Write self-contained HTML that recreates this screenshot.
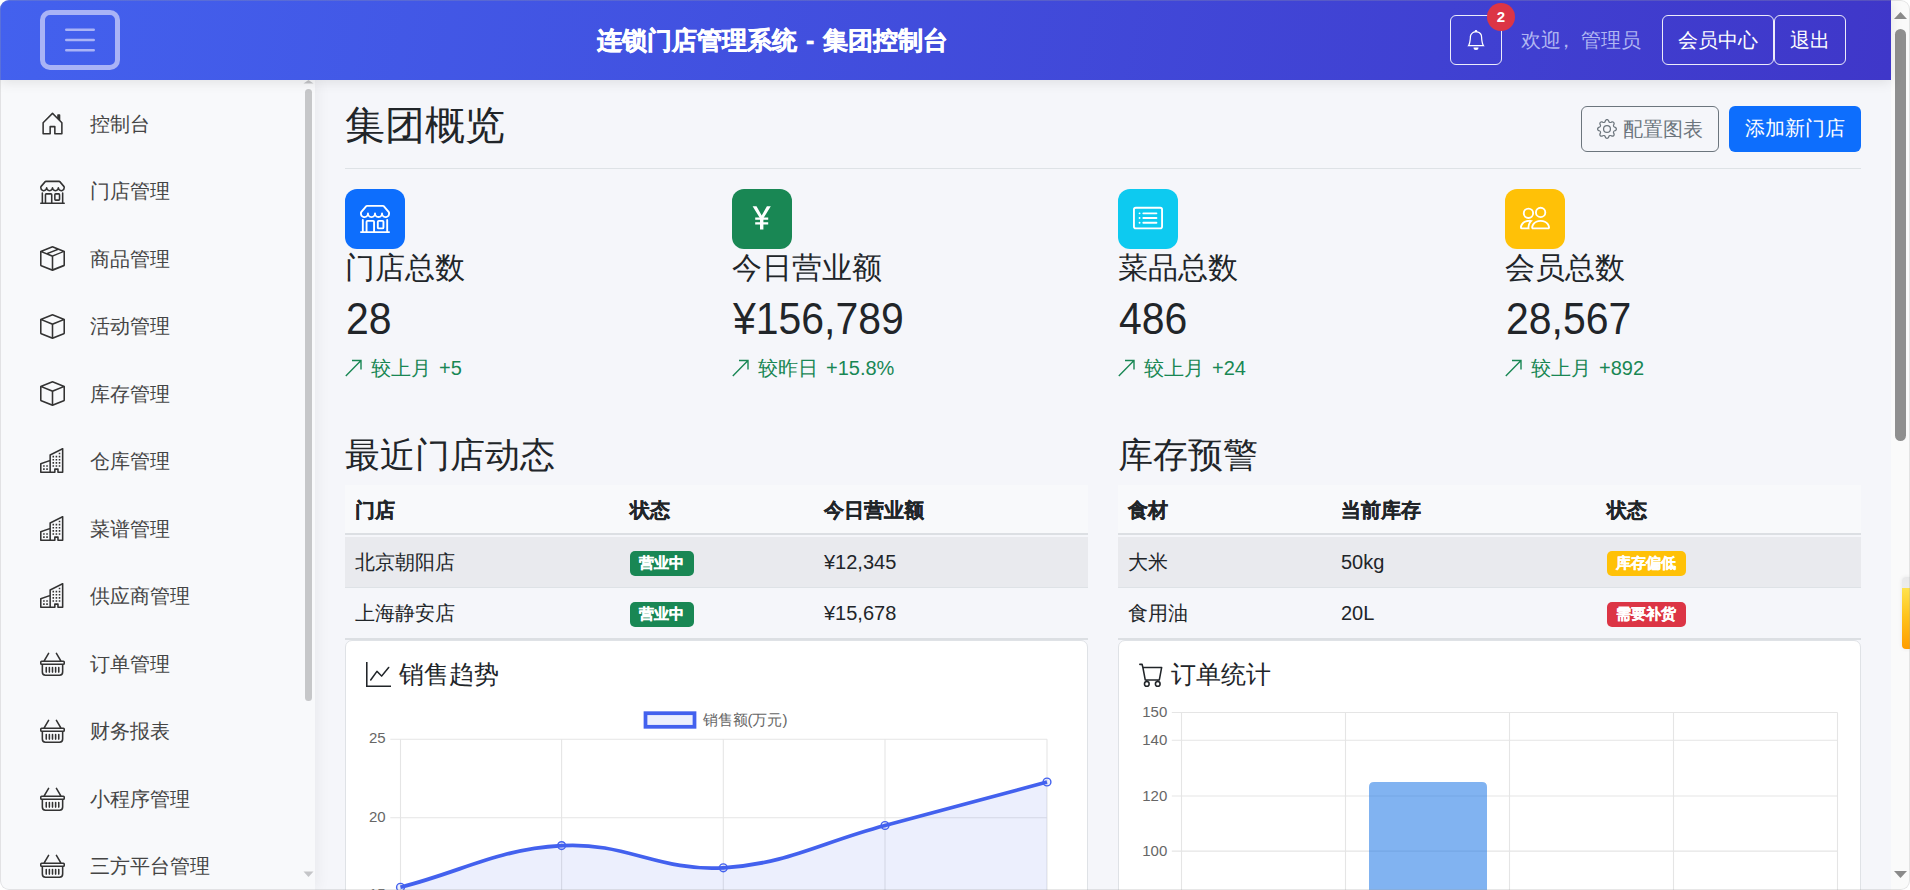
<!DOCTYPE html>
<html lang="zh">
<head>
<meta charset="utf-8">
<style>
*{box-sizing:border-box;margin:0;padding:0}
html,body{width:1910px;height:890px;overflow:hidden;background:#ffffff}
body{font-family:"Liberation Sans",sans-serif;color:#212529;position:relative}
.win{position:absolute;left:0;top:0;width:1910px;height:890px;border-radius:9px;overflow:hidden;background:#f5f6fa}
.abs{position:absolute}
/* header */
.hdr{position:absolute;left:0;top:0;width:1891px;height:80px;background:linear-gradient(100deg,#4361ee 0%,#3f37c9 100%);z-index:5;box-shadow:0 2px 12px rgba(0,0,0,0.10)}
.tog{position:absolute;left:40px;top:10px;width:80px;height:60px;border:5px solid #a9b3f6;border-radius:10px}
.title{position:absolute;left:597px;top:24px;font-size:25px;font-weight:bold;color:#fff;-webkit-text-stroke:0.5px #fff;white-space:nowrap;line-height:32px}
.hbtn{position:absolute;top:15px;height:50px;border:1px solid rgba(255,255,255,0.9);border-radius:6px;color:#fff;font-size:20px;line-height:48px;text-align:center;white-space:nowrap}
/* sidebar */
.side{position:absolute;left:0;top:80px;width:315px;height:810px;background:#f8f9fb;z-index:3;box-shadow:2px 0 14px rgba(0,0,0,0.06)}
.nav{position:absolute;left:0;width:300px;height:40px}
.nav svg{position:absolute;left:40px;top:7.2px}
.nav span{position:absolute;left:90px;top:0;font-size:20px;line-height:40px;color:#454545;white-space:nowrap}
/* scrollbars */
.sb{position:absolute;left:1891px;top:0;width:19px;height:890px;background:#fafafa}
/* main */
.h1{position:absolute;left:345px;top:101px;font-size:40px;line-height:48px;color:#212529;white-space:nowrap}
.rule{position:absolute;left:345px;top:168px;width:1516px;height:1px;background:#dee2e6}
.btn{position:absolute;top:106px;height:46px;border-radius:6px;font-size:20px;line-height:44px;white-space:nowrap}
.ibox{position:absolute;top:189px;width:60px;height:60px;border-radius:12px}
.lbl{position:absolute;top:248px;font-size:30px;line-height:40px;color:#212529;white-space:nowrap}
.num{position:absolute;top:292.5px;font-size:44.5px;line-height:52px;color:#212529;white-space:nowrap;transform:scaleX(0.92);transform-origin:0 0}
.trend{position:absolute;top:354px;font-size:20px;line-height:28px;color:#198754;white-space:nowrap}
.sec{position:absolute;top:433px;font-size:35px;line-height:44px;color:#212529;white-space:nowrap}
.tbl{position:absolute;top:485px;width:743px;height:155px}
.th{position:absolute;left:0;top:0;width:743px;height:50px;background:#f8f9fb;border-bottom:2px solid #dcdfe3}
.tr1{position:absolute;left:0;top:52px;width:743px;height:51px;background:#e9eaee;border-bottom:1px solid #dee2e6}
.tr2{position:absolute;left:0;top:103px;width:743px;height:52px;background:#f5f6fa;border-bottom:2px solid #dcdfe3}
.cell{position:absolute;font-size:20px;line-height:50px;white-space:nowrap;color:#212529}
.th .cell{font-weight:bold;-webkit-text-stroke:0.3px #212529}
.badge{position:absolute;top:14px;height:25px;width:64px;border-radius:5px;color:#fff;font-weight:bold;font-size:15px;line-height:24px;text-align:center;padding-right:1px;-webkit-text-stroke:0.3px #fff}
.card{position:absolute;top:640px;width:743px;height:300px;background:#fff;border:1px solid #dfe2e6;border-radius:7px}
.ctitle{position:absolute;top:655px;font-size:25px;line-height:38px;color:#212529;white-space:nowrap}
</style>
</head>
<body>
<div class="win">

<!-- HEADER -->
<div class="hdr">
  <div class="tog">
    </div>
  <svg class="abs" style="left:0;top:0" width="130" height="80"><path d="M66.3 29.8H93.7M66.3 40H93.7M66.3 50.2H93.7" stroke="#a9b3f6" stroke-width="2.6" stroke-linecap="round"/></svg>
  <div class="title">连锁门店管理系统</div><div class="title" style="left:806px">-</div><div class="title" style="left:823px">集团控制台</div>
  <div class="hbtn" style="left:1450px;width:52px"></div>
  <svg class="abs" style="left:1466px;top:29px" width="20" height="22" viewBox="0 0 16 16"><path fill="#fff" d="M8 16a2 2 0 0 0 2-2H6a2 2 0 0 0 2 2M8 1.918l-.797.161A4 4 0 0 0 4 6c0 .628-.134 2.197-.459 3.742-.16.767-.376 1.566-.663 2.258h10.244c-.287-.692-.502-1.49-.663-2.258C12.134 8.197 12 6.628 12 6a4 4 0 0 0-3.203-3.92zM14.22 12c.223.447.481.801.78 1H1c.299-.199.557-.553.78-1C2.68 10.2 3 6.88 3 6c0-2.42 1.72-4.44 4.005-4.901a1 1 0 1 1 1.99 0A5 5 0 0 1 13 6c0 .88.32 4.2 1.22 6"/></svg>
  <div class="abs" style="left:1487px;top:3px;width:28px;height:28px;border-radius:14px;background:#dc3545;color:#fff;font-weight:bold;font-size:15px;line-height:28px;text-align:center">2</div>
  <div class="abs" style="left:1521px;top:24px;font-size:20px;line-height:32px;color:#b0b6f2;white-space:nowrap">欢迎</div><div class="abs" style="left:1561px;top:24px;font-size:20px;line-height:32px;color:#b0b6f2;white-space:nowrap;transform:translateX(-5px)">，</div><div class="abs" style="left:1581px;top:24px;font-size:20px;line-height:32px;color:#b0b6f2;white-space:nowrap">管理员</div>
  <div class="hbtn" style="left:1662px;width:112px">会员中心</div>
  <div class="hbtn" style="left:1774px;width:72px">退出</div>
</div>

<!-- SIDEBAR -->
<div class="side" id="side">
<div class="nav" style="top:24.0px"><svg width="25" height="25" viewBox="0 0 16 16" fill="#333"><path d="M8.354 1.146a.5.5 0 0 0-.708 0l-6 6A.5.5 0 0 0 1.5 7.5v7a.5.5 0 0 0 .5.5h4.5a.5.5 0 0 0 .5-.5v-4h2v4a.5.5 0 0 0 .5.5H14a.5.5 0 0 0 .5-.5v-7a.5.5 0 0 0-.146-.354L13 5.793V2.5a.5.5 0 0 0-.5-.5h-1a.5.5 0 0 0-.5.5v1.293zM2.5 14V7.707l5.5-5.5 5.5 5.5V14H10v-4a.5.5 0 0 0-.5-.5h-3a.5.5 0 0 0-.5.5v4z"/></svg><span>控制台</span></div>
<div class="nav" style="top:91.4px"><svg width="25" height="25" viewBox="0 0 16 16" fill="#333"><path d="M2.97 1.35A1 1 0 0 1 3.73 1h8.54a1 1 0 0 1 .76.35l2.609 3.044A1.5 1.5 0 0 1 16 5.37v.255a2.375 2.375 0 0 1-4.25 1.458A2.37 2.37 0 0 1 9.875 8 2.37 2.37 0 0 1 8 7.083 2.37 2.37 0 0 1 6.125 8a2.37 2.37 0 0 1-1.875-.917A2.375 2.375 0 0 1 0 5.625V5.37a1.5 1.5 0 0 1 .361-.976zm1.78 4.275a1.375 1.375 0 0 0 2.75 0 .5.5 0 0 1 1 0 1.375 1.375 0 0 0 2.75 0 .5.5 0 0 1 1 0 1.375 1.375 0 1 0 2.75 0V5.37a.5.5 0 0 0-.12-.325L12.27 2H3.73L1.12 5.045A.5.5 0 0 0 1 5.37v.255a1.375 1.375 0 0 0 2.75 0 .5.5 0 0 1 1 0M1.5 8.5A.5.5 0 0 1 2 9v6h1v-5a1 1 0 0 1 1-1h3a1 1 0 0 1 1 1v5h6V9a.5.5 0 0 1 1 0v6h.5a.5.5 0 0 1 0 1H.5a.5.5 0 0 1 0-1H1V9a.5.5 0 0 1 .5-.5M4 15h3v-5H4zm5-5a1 1 0 0 1 1-1h2a1 1 0 0 1 1 1v3a1 1 0 0 1-1 1h-2a1 1 0 0 1-1-1zm3 0h-2v3h2z"/></svg><span>门店管理</span></div>
<div class="nav" style="top:158.9px"><svg width="25" height="25" viewBox="0 0 16 16" fill="#333"><path d="M8.186 1.113a.5.5 0 0 0-.372 0L1.846 3.5l2.404.961L10.404 2zm3.564 1.426L5.596 5 8 5.961 14.154 3.5zm3.25 1.538-6.5 2.6v7.922l6.5-2.6V4.24zM7.5 14.762V6.838L1 4.239v7.923zM7.443.184a1.5 1.5 0 0 1 1.114 0l7.129 2.852A.5.5 0 0 1 16 3.5v8.662a1 1 0 0 1-.629.928l-7.185 2.874a.5.5 0 0 1-.372 0L.63 13.09a1 1 0 0 1-.63-.928V3.5a.5.5 0 0 1 .314-.464z"/></svg><span>商品管理</span></div>
<div class="nav" style="top:226.4px"><svg width="25" height="25" viewBox="0 0 16 16" fill="#333"><path d="M8.186 1.113a.5.5 0 0 0-.372 0L1.846 3.5 8 5.961 14.154 3.5zM15 4.239l-6.5 2.6v7.922l6.5-2.6V4.24zM7.5 14.762V6.838L1 4.239v7.923zM7.443.184a1.5 1.5 0 0 1 1.114 0l7.129 2.852A.5.5 0 0 1 16 3.5v8.662a1 1 0 0 1-.629.928l-7.185 2.874a.5.5 0 0 1-.372 0L.63 13.09a1 1 0 0 1-.63-.928V3.5a.5.5 0 0 1 .314-.464z"/></svg><span>活动管理</span></div>
<div class="nav" style="top:293.8px"><svg width="25" height="25" viewBox="0 0 16 16" fill="#333"><path d="M8.186 1.113a.5.5 0 0 0-.372 0L1.846 3.5 8 5.961 14.154 3.5zM15 4.239l-6.5 2.6v7.922l6.5-2.6V4.24zM7.5 14.762V6.838L1 4.239v7.923zM7.443.184a1.5 1.5 0 0 1 1.114 0l7.129 2.852A.5.5 0 0 1 16 3.5v8.662a1 1 0 0 1-.629.928l-7.185 2.874a.5.5 0 0 1-.372 0L.63 13.09a1 1 0 0 1-.63-.928V3.5a.5.5 0 0 1 .314-.464z"/></svg><span>库存管理</span></div>
<div class="nav" style="top:361.2px"><svg width="25" height="25" viewBox="0 0 16 16" fill="#333"><path d="M14.763.075A.5.5 0 0 1 15 .5v15a.5.5 0 0 1-.5.5h-3a.5.5 0 0 1-.5-.5V14h-1v1.5a.5.5 0 0 1-.5.5h-9a.5.5 0 0 1-.5-.5V10a.5.5 0 0 1 .342-.474L6 7.64V4.5a.5.5 0 0 1 .276-.447l8-4a.5.5 0 0 1 .487.022M6 8.694 1 10.36V15h5zM7 15h2v-1.5a.5.5 0 0 1 .5-.5h2a.5.5 0 0 1 .5.5V15h2V1.309l-7 3.5z"/><path d="M2 11h1v1H2zm2 0h1v1H4zm-2 2h1v1H2zm2 0h1v1H4zm4-4h1v1H8zm2 0h1v1h-1zm-2 2h1v1H8zm2 0h1v1h-1zm2-2h1v1h-1zm0 2h1v1h-1zM8 7h1v1H8zm2 0h1v1h-1zm2 0h1v1h-1zM8 5h1v1H8zm2 0h1v1h-1zm2 0h1v1h-1zm0-2h1v1h-1z"/></svg><span>仓库管理</span></div>
<div class="nav" style="top:428.7px"><svg width="25" height="25" viewBox="0 0 16 16" fill="#333"><path d="M14.763.075A.5.5 0 0 1 15 .5v15a.5.5 0 0 1-.5.5h-3a.5.5 0 0 1-.5-.5V14h-1v1.5a.5.5 0 0 1-.5.5h-9a.5.5 0 0 1-.5-.5V10a.5.5 0 0 1 .342-.474L6 7.64V4.5a.5.5 0 0 1 .276-.447l8-4a.5.5 0 0 1 .487.022M6 8.694 1 10.36V15h5zM7 15h2v-1.5a.5.5 0 0 1 .5-.5h2a.5.5 0 0 1 .5.5V15h2V1.309l-7 3.5z"/><path d="M2 11h1v1H2zm2 0h1v1H4zm-2 2h1v1H2zm2 0h1v1H4zm4-4h1v1H8zm2 0h1v1h-1zm-2 2h1v1H8zm2 0h1v1h-1zm2-2h1v1h-1zm0 2h1v1h-1zM8 7h1v1H8zm2 0h1v1h-1zm2 0h1v1h-1zM8 5h1v1H8zm2 0h1v1h-1zm2 0h1v1h-1zm0-2h1v1h-1z"/></svg><span>菜谱管理</span></div>
<div class="nav" style="top:496.2px"><svg width="25" height="25" viewBox="0 0 16 16" fill="#333"><path d="M14.763.075A.5.5 0 0 1 15 .5v15a.5.5 0 0 1-.5.5h-3a.5.5 0 0 1-.5-.5V14h-1v1.5a.5.5 0 0 1-.5.5h-9a.5.5 0 0 1-.5-.5V10a.5.5 0 0 1 .342-.474L6 7.64V4.5a.5.5 0 0 1 .276-.447l8-4a.5.5 0 0 1 .487.022M6 8.694 1 10.36V15h5zM7 15h2v-1.5a.5.5 0 0 1 .5-.5h2a.5.5 0 0 1 .5.5V15h2V1.309l-7 3.5z"/><path d="M2 11h1v1H2zm2 0h1v1H4zm-2 2h1v1H2zm2 0h1v1H4zm4-4h1v1H8zm2 0h1v1h-1zm-2 2h1v1H8zm2 0h1v1h-1zm2-2h1v1h-1zm0 2h1v1h-1zM8 7h1v1H8zm2 0h1v1h-1zm2 0h1v1h-1zM8 5h1v1H8zm2 0h1v1h-1zm2 0h1v1h-1zm0-2h1v1h-1z"/></svg><span>供应商管理</span></div>
<div class="nav" style="top:563.6px"><svg width="25" height="25" viewBox="0 0 16 16" fill="#333"><path d="M5.757 1.071a.5.5 0 0 1 .172.686L3.383 6h9.234L10.07 1.757a.5.5 0 1 1 .858-.514L13.783 6H15a1 1 0 0 1 1 1v1a1 1 0 0 1-1 1v4.5a2.5 2.5 0 0 1-2.5 2.5h-9A2.5 2.5 0 0 1 1 13.5V9a1 1 0 0 1-1-1V7a1 1 0 0 1 1-1h1.217L5.07 1.243a.5.5 0 0 1 .686-.172zM2 9v4.5A1.5 1.5 0 0 0 3.5 15h9a1.5 1.5 0 0 0 1.5-1.5V9zM1 7v1h14V7zm3 3a.5.5 0 0 1 .5.5v3a.5.5 0 0 1-1 0v-3A.5.5 0 0 1 4 10m2 0a.5.5 0 0 1 .5.5v3a.5.5 0 0 1-1 0v-3A.5.5 0 0 1 6 10m2 0a.5.5 0 0 1 .5.5v3a.5.5 0 0 1-1 0v-3A.5.5 0 0 1 8 10m2 0a.5.5 0 0 1 .5.5v3a.5.5 0 0 1-1 0v-3a.5.5 0 0 1 .5-.5m2 0a.5.5 0 0 1 .5.5v3a.5.5 0 0 1-1 0v-3a.5.5 0 0 1 .5-.5"/></svg><span>订单管理</span></div>
<div class="nav" style="top:631.1px"><svg width="25" height="25" viewBox="0 0 16 16" fill="#333"><path d="M5.757 1.071a.5.5 0 0 1 .172.686L3.383 6h9.234L10.07 1.757a.5.5 0 1 1 .858-.514L13.783 6H15a1 1 0 0 1 1 1v1a1 1 0 0 1-1 1v4.5a2.5 2.5 0 0 1-2.5 2.5h-9A2.5 2.5 0 0 1 1 13.5V9a1 1 0 0 1-1-1V7a1 1 0 0 1 1-1h1.217L5.07 1.243a.5.5 0 0 1 .686-.172zM2 9v4.5A1.5 1.5 0 0 0 3.5 15h9a1.5 1.5 0 0 0 1.5-1.5V9zM1 7v1h14V7zm3 3a.5.5 0 0 1 .5.5v3a.5.5 0 0 1-1 0v-3A.5.5 0 0 1 4 10m2 0a.5.5 0 0 1 .5.5v3a.5.5 0 0 1-1 0v-3A.5.5 0 0 1 6 10m2 0a.5.5 0 0 1 .5.5v3a.5.5 0 0 1-1 0v-3A.5.5 0 0 1 8 10m2 0a.5.5 0 0 1 .5.5v3a.5.5 0 0 1-1 0v-3a.5.5 0 0 1 .5-.5m2 0a.5.5 0 0 1 .5.5v3a.5.5 0 0 1-1 0v-3a.5.5 0 0 1 .5-.5"/></svg><span>财务报表</span></div>
<div class="nav" style="top:698.5px"><svg width="25" height="25" viewBox="0 0 16 16" fill="#333"><path d="M5.757 1.071a.5.5 0 0 1 .172.686L3.383 6h9.234L10.07 1.757a.5.5 0 1 1 .858-.514L13.783 6H15a1 1 0 0 1 1 1v1a1 1 0 0 1-1 1v4.5a2.5 2.5 0 0 1-2.5 2.5h-9A2.5 2.5 0 0 1 1 13.5V9a1 1 0 0 1-1-1V7a1 1 0 0 1 1-1h1.217L5.07 1.243a.5.5 0 0 1 .686-.172zM2 9v4.5A1.5 1.5 0 0 0 3.5 15h9a1.5 1.5 0 0 0 1.5-1.5V9zM1 7v1h14V7zm3 3a.5.5 0 0 1 .5.5v3a.5.5 0 0 1-1 0v-3A.5.5 0 0 1 4 10m2 0a.5.5 0 0 1 .5.5v3a.5.5 0 0 1-1 0v-3A.5.5 0 0 1 6 10m2 0a.5.5 0 0 1 .5.5v3a.5.5 0 0 1-1 0v-3A.5.5 0 0 1 8 10m2 0a.5.5 0 0 1 .5.5v3a.5.5 0 0 1-1 0v-3a.5.5 0 0 1 .5-.5m2 0a.5.5 0 0 1 .5.5v3a.5.5 0 0 1-1 0v-3a.5.5 0 0 1 .5-.5"/></svg><span>小程序管理</span></div>
<div class="nav" style="top:766.0px"><svg width="25" height="25" viewBox="0 0 16 16" fill="#333"><path d="M5.757 1.071a.5.5 0 0 1 .172.686L3.383 6h9.234L10.07 1.757a.5.5 0 1 1 .858-.514L13.783 6H15a1 1 0 0 1 1 1v1a1 1 0 0 1-1 1v4.5a2.5 2.5 0 0 1-2.5 2.5h-9A2.5 2.5 0 0 1 1 13.5V9a1 1 0 0 1-1-1V7a1 1 0 0 1 1-1h1.217L5.07 1.243a.5.5 0 0 1 .686-.172zM2 9v4.5A1.5 1.5 0 0 0 3.5 15h9a1.5 1.5 0 0 0 1.5-1.5V9zM1 7v1h14V7zm3 3a.5.5 0 0 1 .5.5v3a.5.5 0 0 1-1 0v-3A.5.5 0 0 1 4 10m2 0a.5.5 0 0 1 .5.5v3a.5.5 0 0 1-1 0v-3A.5.5 0 0 1 6 10m2 0a.5.5 0 0 1 .5.5v3a.5.5 0 0 1-1 0v-3A.5.5 0 0 1 8 10m2 0a.5.5 0 0 1 .5.5v3a.5.5 0 0 1-1 0v-3a.5.5 0 0 1 .5-.5m2 0a.5.5 0 0 1 .5.5v3a.5.5 0 0 1-1 0v-3a.5.5 0 0 1 .5-.5"/></svg><span>三方平台管理</span></div>
<svg class="abs" style="left:300px;top:0" width="15" height="810"><path d="M8.5 0L3.5 3.5L13.5 3.5Z" fill="#c4c5c8"/><rect x="5" y="9" width="7" height="612" rx="3.5" fill="#c6c7c9"/><path d="M3.5 791.5L13.5 791.5L8.5 797Z" fill="#c4c5c8"/></svg>
</div>

<!-- PAGE SCROLLBAR -->
<div class="sb">
  <svg class="abs" style="left:0;top:0" width="19" height="890"><path d="M3 19L9.5 12L16 19Z" fill="#8a8a8a"/><rect x="4" y="29" width="11" height="412" rx="5.5" fill="#8f8f8f"/><path d="M3 871L16 871L9.5 878Z" fill="#8a8a8a"/></svg>
</div>

<!-- MAIN -->
<div class="h1">集团概览</div>
<div class="btn" style="left:1581px;width:138px;border:1px solid #6c757d;color:#6c757d"><span class="abs" style="left:41px;top:0">配置图表</span><svg class="abs" style="left:15px;top:12px" width="20" height="20" viewBox="0 0 16 16" fill="#6c757d"><path d="M8 4.754a3.246 3.246 0 1 0 0 6.492 3.246 3.246 0 0 0 0-6.492M5.754 8a2.246 2.246 0 1 1 4.492 0 2.246 2.246 0 0 1-4.492 0"/><path d="M9.796 1.343c-.527-1.79-3.065-1.79-3.592 0l-.094.319a.873.873 0 0 1-1.255.52l-.292-.16c-1.64-.892-3.433.902-2.54 2.541l.159.292a.873.873 0 0 1-.52 1.255l-.319.094c-1.79.527-1.79 3.065 0 3.592l.319.094a.873.873 0 0 1 .52 1.255l-.16.292c-.892 1.64.901 3.434 2.541 2.54l.292-.159a.873.873 0 0 1 1.255.52l.094.319c.527 1.79 3.065 1.79 3.592 0l.094-.319a.873.873 0 0 1 1.255-.52l.292.16c1.64.893 3.434-.902 2.54-2.541l-.159-.292a.873.873 0 0 1 .52-1.255l.319-.094c1.79-.527 1.79-3.065 0-3.592l-.319-.094a.873.873 0 0 1-.52-1.255l.16-.292c.893-1.64-.902-3.433-2.541-2.54l-.292.159a.873.873 0 0 1-1.255-.52zm-2.633.283c.246-.835 1.428-.835 1.674 0l.094.319a1.873 1.873 0 0 0 2.693 1.115l.291-.16c.764-.415 1.6.42 1.184 1.185l-.159.292a1.873 1.873 0 0 0 1.116 2.692l.318.094c.835.246.835 1.428 0 1.674l-.319.094a1.873 1.873 0 0 0-1.115 2.693l.16.291c.415.764-.42 1.6-1.185 1.184l-.291-.159a1.873 1.873 0 0 0-2.693 1.116l-.094.318c-.246.835-1.428.835-1.674 0l-.094-.319a1.873 1.873 0 0 0-2.692-1.115l-.292.16c-.764.415-1.6-.42-1.184-1.185l.159-.291A1.873 1.873 0 0 0 1.945 8.93l-.319-.094c-.835-.246-.835-1.428 0-1.674l.319-.094A1.873 1.873 0 0 0 3.06 4.377l-.16-.292c-.415-.764.42-1.6 1.185-1.184l.292.159a1.873 1.873 0 0 0 2.692-1.115z"/></svg></div>
<div class="btn" style="left:1729px;width:132px;background:#0d6efd;color:#fff;text-align:center">添加新门店</div>
<div class="rule"></div>

<div class="ibox" style="left:345px;background:#0d6efd"><svg class="abs" style="left:15px;top:14px" width="30" height="30" viewBox="0 0 16 16" fill="#fff"><path d="M2.97 1.35A1 1 0 0 1 3.73 1h8.54a1 1 0 0 1 .76.35l2.609 3.044A1.5 1.5 0 0 1 16 5.37v.255a2.375 2.375 0 0 1-4.25 1.458A2.37 2.37 0 0 1 9.875 8 2.37 2.37 0 0 1 8 7.083 2.37 2.37 0 0 1 6.125 8a2.37 2.37 0 0 1-1.875-.917A2.375 2.375 0 0 1 0 5.625V5.37a1.5 1.5 0 0 1 .361-.976zm1.78 4.275a1.375 1.375 0 0 0 2.75 0 .5.5 0 0 1 1 0 1.375 1.375 0 0 0 2.75 0 .5.5 0 0 1 1 0 1.375 1.375 0 1 0 2.75 0V5.37a.5.5 0 0 0-.12-.325L12.27 2H3.73L1.12 5.045A.5.5 0 0 0 1 5.37v.255a1.375 1.375 0 0 0 2.75 0 .5.5 0 0 1 1 0M1.5 8.5A.5.5 0 0 1 2 9v6h1v-5a1 1 0 0 1 1-1h3a1 1 0 0 1 1 1v5h6V9a.5.5 0 0 1 1 0v6h.5a.5.5 0 0 1 0 1H.5a.5.5 0 0 1 0-1H1V9a.5.5 0 0 1 .5-.5M4 15h3v-5H4zm5-5a1 1 0 0 1 1-1h2a1 1 0 0 1 1 1v3a1 1 0 0 1-1 1h-2a1 1 0 0 1-1-1zm3 0h-2v3h2z"/></svg></div>
<div class="ibox" style="left:732px;background:#198754"><svg class="abs" style="left:0;top:0" width="60" height="60"><path d="M20.6 17.2H24.5L29.7 26.6L34.9 17.2H38.8L31.4 29.2V40.5H28V29.2Z" fill="#fff"/><path d="M23.2 29.7H36.2M23.2 34.3H36.2" stroke="#fff" stroke-width="2.3" fill="none"/></svg></div>
<div class="ibox" style="left:1118px;background:#0dcaf0"><svg class="abs" style="left:14.5px;top:13.6px" width="30" height="30" viewBox="0 0 16 16" fill="#fff"><path d="M14.5 3a.5.5 0 0 1 .5.5v9a.5.5 0 0 1-.5.5h-13a.5.5 0 0 1-.5-.5v-9a.5.5 0 0 1 .5-.5zm-13-1A1.5 1.5 0 0 0 0 3.5v9A1.5 1.5 0 0 0 1.5 14h13a1.5 1.5 0 0 0 1.5-1.5v-9A1.5 1.5 0 0 0 14.5 2z"/><path d="M5 8a.5.5 0 0 1 .5-.5h7a.5.5 0 0 1 0 1h-7A.5.5 0 0 1 5 8m0-2.5a.5.5 0 0 1 .5-.5h7a.5.5 0 0 1 0 1h-7a.5.5 0 0 1-.5-.5m0 5a.5.5 0 0 1 .5-.5h7a.5.5 0 0 1 0 1h-7a.5.5 0 0 1-.5-.5m-1-5a.5.5 0 1 1-1 0 .5.5 0 0 1 1 0M4 8a.5.5 0 1 1-1 0 .5.5 0 0 1 1 0m0 2.5a.5.5 0 1 1-1 0 .5.5 0 0 1 1 0"/></svg></div>
<div class="ibox" style="left:1505px;background:#ffc107"><svg class="abs" style="left:14.5px;top:13.5px" width="30" height="30" viewBox="0 0 16 16" fill="#fff"><path d="M15 14s1 0 1-1-1-4-5-4-5 3-5 4 1 1 1 1zm-7.978-1L7 12.996c.001-.264.167-1.03.76-1.72C8.312 10.629 9.282 10 11 10c1.717 0 2.687.63 3.24 1.276.593.69.758 1.457.76 1.72l-.008.002-.014.002zM11 7a2 2 0 1 0 0-4 2 2 0 0 0 0 4m3-2a3 3 0 1 1-6 0 3 3 0 0 1 6 0M6.936 9.28a6 6 0 0 0-1.23-.247A7 7 0 0 0 5 9c-4 0-5 3-5 4q0 1 1 1h4.216A2.24 2.24 0 0 1 5 13c0-1.01.377-2.042 1.09-2.904.243-.294.526-.569.846-.816M4.92 10A5.5 5.5 0 0 0 4 13H1c0-.26.164-1.03.76-1.724.545-.636 1.492-1.256 3.16-1.275ZM1.5 5.5a3 3 0 1 1 6 0 3 3 0 0 1-6 0m3-2a2 2 0 1 0 0 4 2 2 0 0 0 0-4"/></svg></div>

<div class="lbl" style="left:345px">门店总数</div>
<div class="lbl" style="left:732px">今日营业额</div>
<div class="lbl" style="left:1118px">菜品总数</div>
<div class="lbl" style="left:1505px">会员总数</div>

<div class="num" style="left:345.8px">28</div>
<div class="num" style="left:732.8px">¥156,789</div>
<div class="num" style="left:1118.8px">486</div>
<div class="num" style="left:1505.8px">28,567</div>

<div class="trend" style="left:345px;width:200px;height:30px"><svg class="abs" style="left:0;top:5px" width="20" height="20"><path d="M0.8 17L16 1.5M7 1.5H16V10.5" stroke="#198754" stroke-width="1.4" fill="none"/></svg><span class="abs" style="left:25.7px;top:0">较上月</span><span class="abs" style="left:94px;top:0">+5</span></div>
<div class="trend" style="left:732px;width:200px;height:30px"><svg class="abs" style="left:0;top:5px" width="20" height="20"><path d="M0.8 17L16 1.5M7 1.5H16V10.5" stroke="#198754" stroke-width="1.4" fill="none"/></svg><span class="abs" style="left:25.7px;top:0">较昨日</span><span class="abs" style="left:94px;top:0">+15.8%</span></div>
<div class="trend" style="left:1118px;width:200px;height:30px"><svg class="abs" style="left:0;top:5px" width="20" height="20"><path d="M0.8 17L16 1.5M7 1.5H16V10.5" stroke="#198754" stroke-width="1.4" fill="none"/></svg><span class="abs" style="left:25.7px;top:0">较上月</span><span class="abs" style="left:94px;top:0">+24</span></div>
<div class="trend" style="left:1505px;width:200px;height:30px"><svg class="abs" style="left:0;top:5px" width="20" height="20"><path d="M0.8 17L16 1.5M7 1.5H16V10.5" stroke="#198754" stroke-width="1.4" fill="none"/></svg><span class="abs" style="left:25.7px;top:0">较上月</span><span class="abs" style="left:94px;top:0">+892</span></div>

<div class="sec" style="left:345px">最近门店动态</div>
<div class="sec" style="left:1118px">库存预警</div>

<div class="tbl" style="left:345px">
  <div class="th"><div class="cell" style="left:10px">门店</div><div class="cell" style="left:285px">状态</div><div class="cell" style="left:479px">今日营业额</div></div>
  <div class="tr1"><div class="cell" style="left:10px">北京朝阳店</div><div class="badge" style="left:285px;background:#198754">营业中</div><div class="cell" style="left:479px">¥12,345</div></div>
  <div class="tr2"><div class="cell" style="left:10px">上海静安店</div><div class="badge" style="left:285px;background:#198754">营业中</div><div class="cell" style="left:479px">¥15,678</div></div>
</div>
<div class="tbl" style="left:1118px">
  <div class="th"><div class="cell" style="left:10px">食材</div><div class="cell" style="left:223px">当前库存</div><div class="cell" style="left:489px">状态</div></div>
  <div class="tr1"><div class="cell" style="left:10px">大米</div><div class="cell" style="left:223px">50kg</div><div class="badge" style="left:489px;width:79px;background:#ffc107">库存偏低</div></div>
  <div class="tr2"><div class="cell" style="left:10px">食用油</div><div class="cell" style="left:223px">20L</div><div class="badge" style="left:489px;width:79px;background:#dc3545">需要补货</div></div>
</div>

<div class="card" style="left:345px"></div>
<div class="card" style="left:1118px"></div>
<div class="ctitle" style="left:399px">销售趋势</div><svg class="abs" style="left:366px;top:662px" width="25" height="25" viewBox="0 0 16 16" fill="#212529"><path fill-rule="evenodd" d="M0 0h1v15h15v1H0zm14.817 3.113a.5.5 0 0 1 .07.704l-4.5 5.5a.5.5 0 0 1-.74.037L7.06 6.767l-3.656 5.027a.5.5 0 0 1-.808-.588l4-5.5a.5.5 0 0 1 .758-.06l2.609 2.61 4.15-5.073a.5.5 0 0 1 .704-.07"/></svg>
<div class="ctitle" style="left:1171px">订单统计</div><svg class="abs" style="left:1138.8px;top:661.8px" width="25" height="25" viewBox="0 0 16 16" fill="#212529"><path d="M0 1.5A.5.5 0 0 1 .5 1H2a.5.5 0 0 1 .485.379L2.89 3H14.5a.5.5 0 0 1 .491.592l-1.5 8A.5.5 0 0 1 13 12H4a.5.5 0 0 1-.491-.408L2.01 3.607 1.61 2H.5a.5.5 0 0 1-.5-.5M3.102 4l1.313 7h8.17l1.313-7zM5 12a2 2 0 1 0 0 4 2 2 0 0 0 0-4m7 0a2 2 0 1 0 0 4 2 2 0 0 0 0-4m-7 1a1 1 0 1 1 0 2 1 1 0 0 1 0-2m7 0a1 1 0 1 1 0 2 1 1 0 0 1 0-2"/></svg>

<div class="abs" style="left:1901.5px;top:577px;width:9px;height:72px;border-radius:4px 0 0 4px;background:linear-gradient(180deg,#e9e9ea 0px,#ececec 11px,#ffe24d 11.5px,#ffc21a 40px,#ff9c00 72px);box-shadow:0 0 4px rgba(0,0,0,0.08);z-index:6"></div>
<div class="abs" style="left:0;top:0;width:1910px;height:890px;border-radius:9px;box-shadow:inset 0 0 0 1px rgba(160,160,160,0.25);z-index:7;pointer-events:none"></div>
<!--CHARTS-->
<svg class="abs" style="left:0;top:0" width="1910" height="890" viewBox="0 0 1910 890">
<defs><clipPath id="cl"><rect x="346" y="641" width="741" height="260"/></clipPath><clipPath id="cr"><rect x="1119" y="641" width="741" height="260"/></clipPath></defs>
<g clip-path="url(#cl)">
<line x1="390.3" y1="739.3" x2="1047" y2="739.3" stroke="#e5e5e5" stroke-width="1.1"/>
<line x1="390.3" y1="817.8" x2="1047" y2="817.8" stroke="#e5e5e5" stroke-width="1.1"/>
<line x1="390.3" y1="896.3" x2="1047" y2="896.3" stroke="#e5e5e5" stroke-width="1.1"/>
<line x1="400.5" y1="739.3" x2="400.5" y2="900" stroke="#e5e5e5" stroke-width="1.1"/>
<line x1="561.6" y1="739.3" x2="561.6" y2="900" stroke="#e5e5e5" stroke-width="1.1"/>
<line x1="723.3" y1="739.3" x2="723.3" y2="900" stroke="#e5e5e5" stroke-width="1.1"/>
<line x1="885" y1="739.3" x2="885" y2="900" stroke="#e5e5e5" stroke-width="1.1"/>
<line x1="1047" y1="739.3" x2="1047" y2="900" stroke="#e5e5e5" stroke-width="1.1"/>
<path d="M400.5 887.3 C464.9 870.6 496.4 849.5 561.6 845.6 C625.5 841.7 659.4 871.8 723.3 867.8 C788.7 863.7 820.4 842.6 885.0 825.5 C949.9 808.3 982.2 799.4 1047.0 782.0 L1047 900 L400.5 900Z" fill="rgba(67,97,238,0.1)"/>
<circle cx="400.5" cy="887.3" r="3.9" fill="rgba(67,97,238,0.1)" stroke="#4361ee" stroke-width="1.4"/>
<circle cx="561.6" cy="845.6" r="3.9" fill="rgba(67,97,238,0.1)" stroke="#4361ee" stroke-width="1.4"/>
<circle cx="723.3" cy="867.8" r="3.9" fill="rgba(67,97,238,0.1)" stroke="#4361ee" stroke-width="1.4"/>
<circle cx="885" cy="825.5" r="3.9" fill="rgba(67,97,238,0.1)" stroke="#4361ee" stroke-width="1.4"/>
<circle cx="1047" cy="782" r="3.9" fill="rgba(67,97,238,0.1)" stroke="#4361ee" stroke-width="1.4"/>
<path d="M400.5 887.3 C464.9 870.6 496.4 849.5 561.6 845.6 C625.5 841.7 659.4 871.8 723.3 867.8 C788.7 863.7 820.4 842.6 885.0 825.5 C949.9 808.3 982.2 799.4 1047.0 782.0" fill="none" stroke="#4361ee" stroke-width="3.75"/>
<text x="385.6" y="743" text-anchor="end" font-size="15" fill="#666">25</text>
<text x="385.6" y="822" text-anchor="end" font-size="15" fill="#666">20</text>
<text x="385.6" y="898.5" text-anchor="end" font-size="15" fill="#666">15</text>
<rect x="645.5" y="713.2" width="49" height="13.6" fill="rgba(67,97,238,0.1)" stroke="#4361ee" stroke-width="3.75"/>
<text x="702.5" y="725" font-size="15" fill="#666">销售额(万元)</text>
</g>
<g clip-path="url(#cr)">
<line x1="1171.8" y1="712.5" x2="1837.5" y2="712.5" stroke="#e5e5e5" stroke-width="1.1"/>
<line x1="1171.8" y1="740.3" x2="1837.5" y2="740.3" stroke="#e5e5e5" stroke-width="1.1"/>
<line x1="1171.8" y1="796" x2="1837.5" y2="796" stroke="#e5e5e5" stroke-width="1.1"/>
<line x1="1171.8" y1="851.1" x2="1837.5" y2="851.1" stroke="#e5e5e5" stroke-width="1.1"/>
<line x1="1181.5" y1="712.5" x2="1181.5" y2="900" stroke="#e5e5e5" stroke-width="1.1"/>
<line x1="1345.5" y1="712.5" x2="1345.5" y2="900" stroke="#e5e5e5" stroke-width="1.1"/>
<line x1="1509.5" y1="712.5" x2="1509.5" y2="900" stroke="#e5e5e5" stroke-width="1.1"/>
<line x1="1673.5" y1="712.5" x2="1673.5" y2="900" stroke="#e5e5e5" stroke-width="1.1"/>
<line x1="1837.5" y1="712.5" x2="1837.5" y2="900" stroke="#e5e5e5" stroke-width="1.1"/>
<path d="M1369 900 L1369 787 Q1369 782 1374 782 L1482 782 Q1487 782 1487 787 L1487 900Z" fill="rgba(30,120,230,0.56)"/>
<text x="1167.3" y="717.0" text-anchor="end" font-size="15" fill="#666">150</text>
<text x="1167.3" y="744.8" text-anchor="end" font-size="15" fill="#666">140</text>
<text x="1167.3" y="800.5" text-anchor="end" font-size="15" fill="#666">120</text>
<text x="1167.3" y="855.6" text-anchor="end" font-size="15" fill="#666">100</text>
</g>
</svg>
<!--/CHARTS-->
</div>
</body>
</html>
